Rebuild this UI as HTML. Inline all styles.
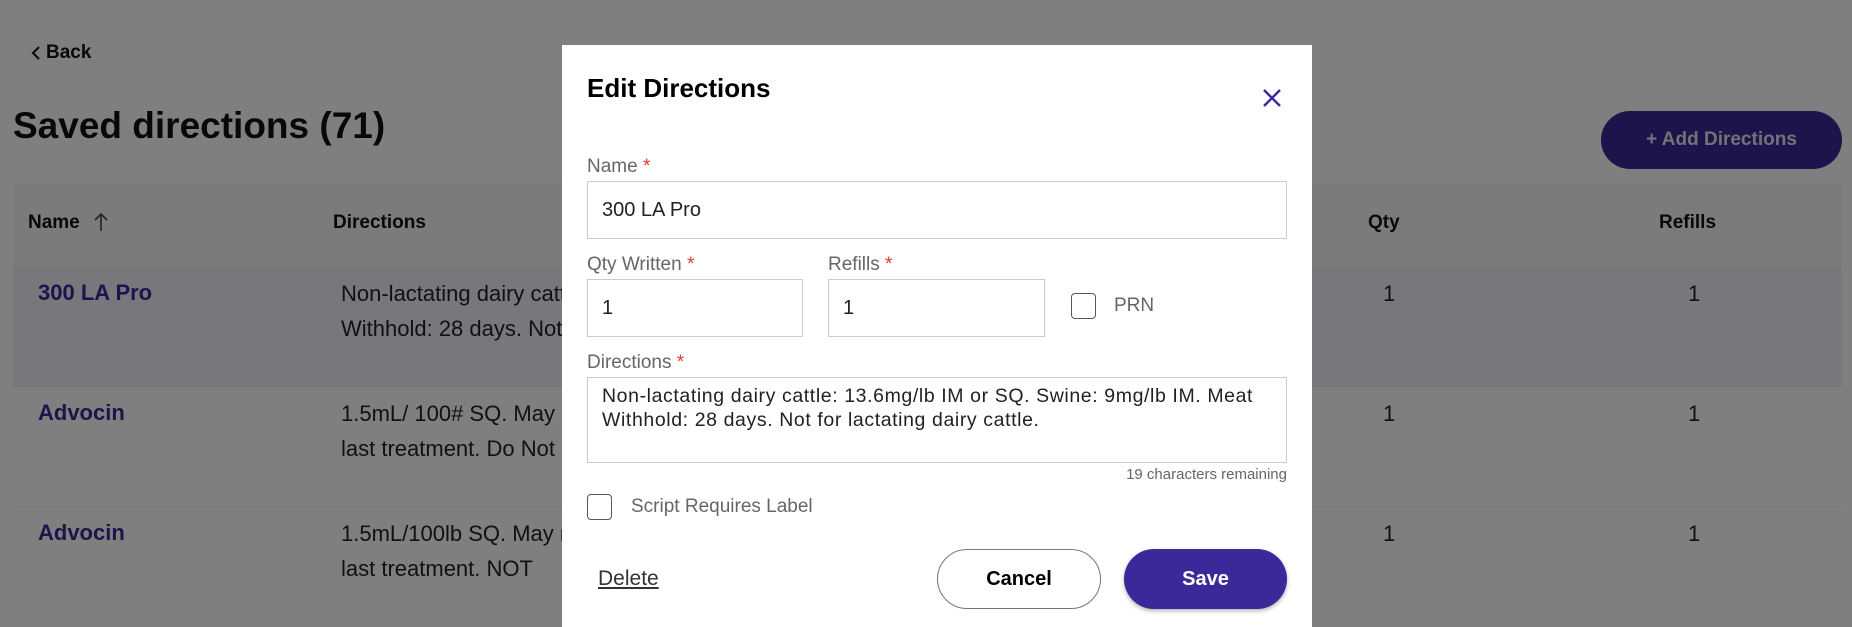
<!DOCTYPE html>
<html style="background:#808080;height:627px;overflow:hidden"><head><meta charset="utf-8"><style>
*{box-sizing:border-box;margin:0;padding:0}
body{width:1852px;height:627px;overflow:hidden;position:relative;background:#fff;font-family:"Liberation Sans",sans-serif;color:#111}
.abs{position:absolute;white-space:nowrap}
.b{font-weight:bold}
#ov{position:fixed;left:0;top:0;right:0;bottom:0;background:rgba(0,0,0,0.5)}
.row{position:absolute;left:13px;width:1829px;border-top:1px solid #eee}
.nm{color:#3b2899;font-weight:bold;font-size:22px}
.dir{font-size:22px;color:#222;line-height:35px}
.modal{position:absolute;left:562px;top:45px;width:750px;height:600px;background:#fff}
.lbl{font-size:19px;color:#666}
.lbl span{color:#e03a3a}
.inp{position:absolute;border:1.5px solid #ccc;background:#fff;font-size:20px;color:#222;padding-left:14px}
.cb{position:absolute;width:25px;height:26px;border:1.5px solid #555;border-radius:4px;background:#fff}
.btn{position:absolute;height:60px;border-radius:30px;font-weight:bold;font-size:20px;text-align:center;line-height:60px}
</style></head><body>
<svg class="abs" style="left:30px;top:45px" width="12" height="16" viewBox="0 0 12 16"><path d="M9 2 L3 8 L9 14" fill="none" stroke="#111" stroke-width="2"/></svg>
<div class="abs b" style="left:46px;top:42px;font-size:19px">Back</div>
<div class="abs b" style="left:13px;top:105px;font-size:37px">Saved directions (71)</div>
<div class="btn" style="left:1601px;top:111px;width:241px;height:58px;line-height:58px;background:#3b2899;color:#e6e4ee;font-size:19px">+ Add Directions</div>
<div class="abs" style="left:13px;top:183px;width:1829px;height:83px;background:#f7f7f7"></div>
<div class="abs b" style="left:28px;top:212px;font-size:19px">Name</div>
<svg class="abs" style="left:94px;top:212px" width="14" height="20" viewBox="0 0 14 20"><path d="M7 19 V2 M1 8 L7 2 L13 8" fill="none" stroke="#444" stroke-width="1.6"/></svg>
<div class="abs b" style="left:333px;top:212px;font-size:19px">Directions</div>
<div class="abs b" style="left:1368px;top:212px;font-size:19px">Qty</div>
<div class="abs b" style="left:1659px;top:212px;font-size:19px">Refills</div>
<div class="row" style="top:266px;height:120px;background:#f1eff8"></div>
<div class="row" style="top:386px;height:120px"></div>
<div class="row" style="top:506px;height:121px"></div>
<div class="abs nm" style="left:38px;top:280px">300 LA Pro</div>
<div class="abs dir" style="left:341px;top:276px">Non-lactating dairy cattle<br>Withhold: 28 days. Not</div>
<div class="abs nm" style="left:38px;top:400px">Advocin</div>
<div class="abs dir" style="left:341px;top:396px">1.5mL/ 100# SQ. May repeat<br>last treatment. Do Not</div>
<div class="abs nm" style="left:38px;top:520px">Advocin</div>
<div class="abs dir" style="left:341px;top:516px">1.5mL/100lb SQ. May repeat<br>last treatment. NOT</div>
<div class="abs dir" style="left:1383px;top:276px">1</div><div class="abs dir" style="left:1688px;top:276px">1</div>
<div class="abs dir" style="left:1383px;top:396px">1</div><div class="abs dir" style="left:1688px;top:396px">1</div>
<div class="abs dir" style="left:1383px;top:516px">1</div><div class="abs dir" style="left:1688px;top:516px">1</div>
<div id="ov"></div>
<div class="modal">
<div class="abs b" style="left:25px;top:28px;font-size:26px;color:#000">Edit Directions</div>
<svg class="abs" style="left:700px;top:43px" width="20" height="20" viewBox="0 0 20 20"><path d="M2 2 L18 18 M18 2 L2 18" stroke="#3b2899" stroke-width="2.4"/></svg>
<div class="abs lbl" style="left:25px;top:111px">Name <span>*</span></div>
<div class="inp" style="left:25px;top:136px;width:700px;height:58px;line-height:56px">300 LA Pro</div>
<div class="abs lbl" style="left:25px;top:209px">Qty Written <span>*</span></div>
<div class="inp" style="left:25px;top:234px;width:216px;height:58px;line-height:56px">1</div>
<div class="abs lbl" style="left:266px;top:209px">Refills <span>*</span></div>
<div class="inp" style="left:266px;top:234px;width:217px;height:58px;line-height:56px">1</div>
<div class="cb" style="left:509px;top:248px"></div>
<div class="abs lbl" style="left:552px;top:250px;font-size:19px">PRN</div>
<div class="abs lbl" style="left:25px;top:307px">Directions <span>*</span></div>
<div class="inp" style="left:25px;top:332px;width:700px;height:86px;font-size:19.5px;letter-spacing:0.6px;line-height:23.5px;padding-top:7px;white-space:nowrap">Non-lactating dairy cattle: 13.6mg/lb IM or SQ. Swine: 9mg/lb IM. Meat<br>Withhold: 28 days. Not for lactating dairy cattle.</div>
<div class="abs" style="right:25px;top:421px;font-size:15px;color:#666">19 characters remaining</div>
<div class="cb" style="left:25px;top:449px"></div>
<div class="abs lbl" style="left:69px;top:451px;font-size:19px">Script Requires Label</div>
<div class="abs" style="left:36px;top:522px;font-size:21px;color:#333;text-decoration:underline">Delete</div>
<div class="btn" style="left:375px;top:504px;width:164px;border:1.5px solid #777;background:#fff;color:#000;line-height:59px">Cancel</div>
<div class="btn" style="left:562px;top:504px;width:163px;background:#3b2899;color:#fff;box-shadow:0 2px 4px rgba(0,0,0,.3)">Save</div>
</div>
</body></html>
